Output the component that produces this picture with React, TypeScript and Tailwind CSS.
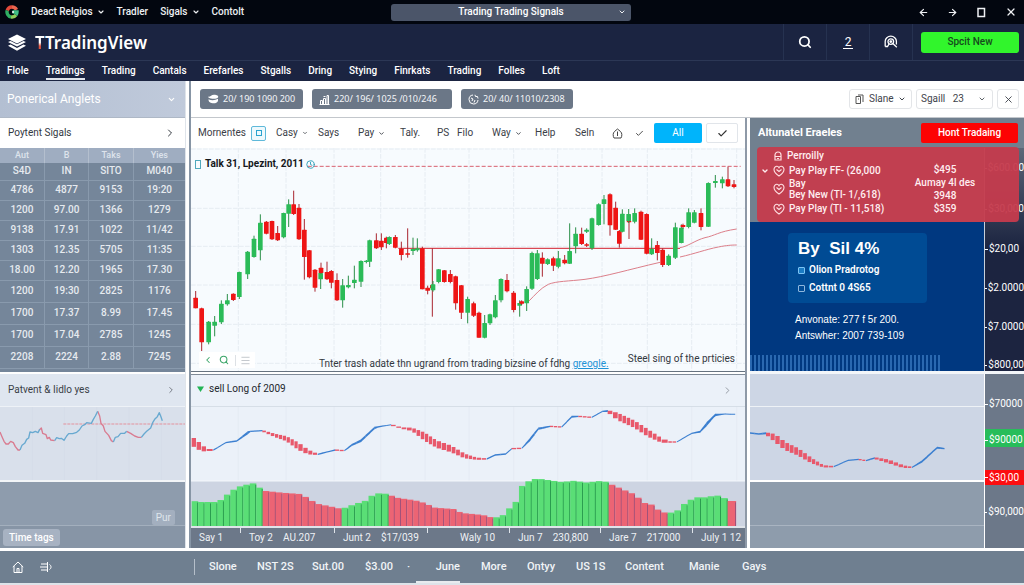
import type { ReactNode } from "react";
import {
  ArrowLeft,
  ArrowRight,
  Check,
  ChevronDown,
  ChevronLeft,
  ChevronRight,
  Clock,
  Menu,
  Search,
  X,
} from "lucide-react";

type Tone = "r" | "g" | "b";
type Candle = [tone: Tone, x: number, high: number, low: number, top: number, bottom: number];
type TrendPoint = [tone: Tone, x: number, y: number, thickness: number];

const CANDLES: Candle[] = [
  ["r", 32, 438, 490, 458, 490], ["r", 50, 488, 618, 490, 592], ["g", 71, 528, 598, 530, 592],
  ["g", 89, 513, 574, 530, 542], ["g", 109, 466, 537, 476, 532], ["g", 127, 447, 482, 466, 478],
  ["r", 145, 445, 468, 446, 465], ["g", 163, 380, 462, 381, 456], ["g", 188, 318, 402, 320, 388],
  ["g", 207, 272, 338, 281, 336], ["g", 226, 208, 346, 233, 316], ["r", 244, 228, 268, 230, 266],
  ["r", 261, 227, 285, 228, 283], ["r", 278, 243, 288, 264, 286], ["g", 296, 203, 280, 204, 277],
  ["g", 311, 163, 246, 178, 206], ["r", 326, 137, 210, 178, 207], ["r", 342, 177, 285, 188, 283],
  ["r", 358, 222, 404, 254, 336], ["r", 373, 315, 400, 316, 397], ["r", 390, 372, 440, 374, 428],
  ["g", 407, 380, 432, 384, 403], ["r", 408, 353, 386, 368, 384], ["r", 426, 350, 405, 381, 403],
  ["r", 439, 375, 430, 378, 413], ["r", 456, 385, 468, 405, 466], ["g", 473, 402, 488, 421, 466],
  ["g", 490, 392, 430, 420, 427], ["g", 508, 362, 430, 404, 414], ["g", 528, 346, 426, 348, 410],
  ["g", 544, 345, 355, 347, 351], ["g", 554, 284, 366, 286, 350], ["r", 574, 265, 312, 286, 310],
  ["r", 589, 265, 315, 287, 307], ["r", 604, 275, 310, 278, 294], ["g", 613, 274, 300, 276, 297],
  ["r", 631, 270, 310, 276, 308], ["r", 649, 290, 346, 311, 330], ["r", 668, 250, 338, 325, 329],
  ["g", 684, 278, 330, 312, 318], ["g", 697, 280, 320, 310, 316], ["r", 712, 305, 433, 310, 433],
  ["r", 728, 422, 448, 428, 437], ["r", 742, 310, 515, 420, 430], ["g", 744, 408, 440, 418, 436],
  ["g", 761, 372, 415, 373, 411], ["r", 778, 375, 413, 376, 411], ["r", 796, 375, 415, 387, 411],
  ["r", 812, 392, 494, 394, 475], ["r", 829, 420, 522, 421, 503], ["g", 848, 455, 535, 462, 503],
  ["r", 866, 470, 516, 475, 512], ["r", 882, 500, 578, 503, 578], ["g", 899, 510, 580, 534, 578],
  ["g", 915, 506, 540, 508, 535], ["g", 931, 450, 520, 466, 517], ["g", 948, 400, 472, 402, 466],
  ["r", 966, 387, 442, 405, 439], ["r", 986, 438, 502, 443, 495], ["g", 1004, 466, 515, 474, 482],
  ["r", 1010, 466, 480, 469, 476], ["g", 1025, 424, 498, 432, 475], ["g", 1041, 320, 435, 324, 431],
  ["g", 1057, 315, 405, 325, 402], ["r", 1072, 322, 395, 338, 356], ["g", 1088, 340, 360, 343, 357],
  ["r", 1105, 335, 378, 340, 362], ["g", 1120, 318, 370, 340, 365], ["r", 1139, 330, 358, 344, 355],
  ["g", 1154, 235, 357, 318, 356], ["g", 1172, 247, 325, 266, 304], ["r", 1190, 248, 300, 266, 297],
  ["g", 1205, 250, 264, 254, 260], ["r", 1205, 294, 306, 298, 302], ["g", 1221, 218, 315, 220, 310],
  ["g", 1241, 175, 242, 178, 240], ["g", 1257, 150, 238, 163, 177], ["r", 1275, 145, 272, 148, 241],
  ["r", 1292, 170, 255, 188, 254], ["r", 1303, 255, 308, 258, 296], ["g", 1312, 193, 262, 206, 260],
  ["r", 1332, 228, 282, 228, 232], ["g", 1331, 192, 234, 207, 228], ["g", 1349, 190, 235, 204, 230],
  ["r", 1368, 197, 285, 200, 284], ["r", 1385, 205, 328, 207, 326], ["g", 1400, 280, 330, 312, 328],
  ["r", 1417, 288, 346, 300, 324], ["r", 1433, 310, 366, 314, 360], ["g", 1451, 328, 363, 332, 360],
  ["g", 1471, 233, 342, 247, 338], ["g", 1489, 238, 295, 248, 294], ["r", 1494, 236, 250, 240, 246],
  ["g", 1511, 190, 250, 202, 246], ["g", 1528, 195, 235, 202, 233], ["r", 1548, 190, 256, 204, 246],
  ["g", 1570, 112, 246, 114, 245], ["g", 1591, 90, 128, 108, 114], ["g", 1612, 95, 130, 103, 115],
  ["r", 1629, 65, 126, 103, 124], ["r", 1647, 105, 130, 118, 126],
];

const MAIN_TREND: TrendPoint[] = [
  ["r", 20, 212, 28], ["r", 50, 233, 22], ["r", 65, 240, 8], ["b", 85, 240, 4], ["b", 122, 218, 4],
  ["b", 155, 213, 5], ["b", 188, 188, 9], ["b", 196, 184, 4], ["r", 232, 182, 4], ["r", 270, 196, 10],
  ["r", 305, 206, 15], ["r", 340, 228, 22], ["r", 370, 246, 14], ["b", 398, 253, 4], ["r", 450, 240, 4],
  ["b", 478, 242, 4], ["b", 500, 225, 6], ["b", 528, 212, 8], ["b", 568, 174, 8], ["b", 578, 171, 4],
  ["r", 618, 164, 3], ["r", 650, 174, 4], ["r", 682, 178, 10], ["r", 720, 200, 25], ["r", 755, 222, 22],
  ["r", 800, 237, 20], ["r", 840, 258, 14], ["r", 875, 266, 7], ["b", 905, 267, 4], ["b", 930, 255, 4],
  ["b", 962, 252, 4], ["r", 980, 236, 4], ["b", 1010, 235, 4], ["b", 1035, 208, 10], ["b", 1060, 176, 7],
  ["r", 1095, 169, 4], ["b", 1130, 171, 4], ["b", 1160, 140, 6], ["r", 1180, 139, 4], ["b", 1220, 142, 4],
  ["b", 1252, 124, 4], ["r", 1268, 123, 6], ["r", 1300, 140, 22], ["r", 1350, 163, 22], ["r", 1390, 189, 22],
  ["r", 1430, 211, 14], ["r", 1450, 216, 5], ["b", 1475, 216, 3], ["b", 1520, 190, 4], ["b", 1545, 185, 6],
  ["b", 1565, 162, 12], ["b", 1590, 135, 7], ["b", 1620, 132, 3], ["b", 1650, 133, 3],
];

const SIDE_TREND: TrendPoint[] = [
  ["b", 14, 189, 4], ["b", 40, 192, 4], ["r", 62, 190, 6], ["r", 90, 204, 24], ["r", 120, 228, 24],
  ["r", 160, 246, 22], ["r", 200, 272, 16], ["r", 235, 289, 7], ["b", 265, 290, 4], ["b", 308, 271, 4],
  ["r", 340, 268, 4], ["b", 362, 272, 4], ["r", 388, 264, 5], ["r", 430, 274, 11], ["r", 475, 290, 8],
  ["b", 500, 292, 4], ["b", 530, 274, 7], ["b", 575, 233, 6], ["b", 597, 236, 4],
];

const VOLUME: [tone: Tone, x: number, top: number][] = [
  ["g", 20, 392], ["g", 45, 396], ["g", 100, 396], ["g", 125, 375], ["g", 150, 356], ["g", 170, 347],
  ["g", 205, 340], ["g", 218, 348], ["r", 233, 362], ["r", 290, 368], ["r", 345, 372], ["r", 375, 388],
  ["r", 390, 400], ["r", 430, 408], ["g", 470, 417], ["g", 510, 402], ["g", 540, 393], ["g", 565, 374],
  ["g", 590, 368], ["r", 611, 374], ["r", 640, 384], ["r", 690, 391], ["r", 715, 398], ["r", 750, 413],
  ["r", 805, 417], ["r", 830, 429], ["r", 875, 433], ["r", 905, 437], ["g", 925, 445], ["g", 955, 435],
  ["g", 975, 413], ["g", 1000, 388], ["g", 1012, 346], ["g", 1040, 328], ["g", 1060, 326], ["g", 1130, 336],
  ["g", 1170, 332], ["g", 1200, 338], ["g", 1255, 332], ["r", 1271, 340], ["r", 1310, 357], ["r", 1350, 374],
  ["r", 1375, 398], ["r", 1400, 404], ["r", 1425, 424], ["g", 1448, 430], ["g", 1475, 424], ["g", 1500, 400],
  ["g", 1530, 382], ["g", 1570, 382], ["g", 1590, 374], ["r", 1628, 388], ["r", 1653, 398],
];

const QUOTES = [
  ["S4D", "IN", "SITO", "M040"],
  ["4786", "4877", "9153", "19:20"],
  ["1200", "97.00", "1366", "1279"],
  ["9138", "17.91", "1022", "11/42"],
  ["1303", "12.35", "5705", "11:35"],
  ["18.00", "12.20", "1965", "17.30"],
  ["1200", "19:30", "2825", "1176"],
  ["1700", "17.37", "8.99", "17.45"],
  ["1700", "17.04", "2785", "1245"],
  ["2208", "2224", "2.88", "7245"],
];

const ROW_HEIGHTS = [
  "h-[17px]", "h-5", "h-5", "h-5", "h-5", "h-5",
  "h-[22px]", "h-[22px]", "h-[22px]", "h-[22px]",
];

function valueAt(points: { x: number; v: number }[], x: number) {
  for (let i = 0; i < points.length - 1; i++) {
    const a = points[i];
    const b = points[i + 1];
    if (x >= a.x && x <= b.x) return a.v + ((b.v - a.v) * (x - a.x)) / (b.x - a.x);
  }
  return points[points.length - 1].v;
}

function Trend({ points }: { points: TrendPoint[] }) {
  const ys = points.map(([, x, y]) => ({ x, v: y }));
  const ts = points.map(([, x, , t]) => ({ x, v: t }));
  const out: ReactNode[] = [];
  points.slice(0, -1).forEach(([tone, x0], i) => {
    const x1 = points[i + 1][1];
    const steps = Math.max(1, Math.round((x1 - x0) / 14));
    for (let s = 0; s < steps; s++) {
      const a = x0 + ((x1 - x0) * s) / steps;
      const b = x0 + ((x1 - x0) * (s + 1)) / steps;
      const ta = valueAt(ts, a) / 2;
      const tb = valueAt(ts, b) / 2;
      const ya = valueAt(ys, a);
      const yb = valueAt(ys, b);
      if (tone === "r") {
        const t = Math.max(ta + tb, 4);
        out.push(<rect key={`${i}-${s}`} x={a} y={(ya + yb) / 2 - t / 2} width={b - a - 2} height={t} fill="#e8586b" />);
      } else {
        out.push(
          <path key={`${i}-${s}`} d={`M${a} ${ya - ta}L${b + 0.6} ${yb - tb}V${yb + tb}L${a} ${ya + ta}Z`} fill="#3b7fd0" />,
        );
      }
    }
  });
  return <g>{out}</g>;
}

function CandleChart() {
  return (
    <svg className="block h-[223px] w-full" viewBox="18 9 1662 669" preserveAspectRatio="none" role="img" aria-label="Price candles">
      <rect x="18" y="9" width="1662" height="669" fill="#f7fbfe" />
      <g stroke="#e6ecf2" strokeWidth="3">
        {[160, 303, 447, 587, 720, 852, 986, 1118, 1251, 1387, 1520, 1655].map((x) => (
          <path key={x} d={`M${x} 9V678`} strokeDasharray="14 4" />
        ))}
        {[12, 190, 304, 420, 538, 655].map((y) => (
          <path key={y} d={`M18 ${y}H1680`} strokeDasharray="14 4" />
        ))}
      </g>
      <path d="M368 64H1667" stroke="#d8616f" strokeWidth="3" strokeDasharray="12 6" />
      <path d="M640 310H1485" stroke="#d94854" strokeWidth="4" />
      <g fill="none" stroke="#dc7f8a" strokeWidth="3">
        <path d="M1030 470C1052 448 1066 430 1090 418C1115 408 1150 409 1200 403C1260 395 1330 374 1425 352M1485 336C1530 326 1560 314 1600 306C1625 301 1640 300 1655 300" />
        <path d="M1485 308C1510 304 1530 286 1560 278C1590 272 1600 260 1655 252" />
      </g>
      {CANDLES.map(([tone, x, high, low, top, bottom], i) => (
        <g key={i} fill={tone === "r" ? "#ee1515" : "#2bbb58"}>
          <rect x={x - 1.5} y={high} width="3" height={low - high} fill={tone === "r" ? "#a92630" : "#2c8f4a"} />
          <rect x={x - 7} y={top} width="14" height={bottom - top} rx="1.5" />
        </g>
      ))}
    </svg>
  );
}

function MomentumChart() {
  const tops = VOLUME.map(([, x, top]) => ({ x, v: top }));
  const bars: ReactNode[] = [];
  let x = 20;
  while (x < 1650) {
    let tone: Tone = "g";
    let next = 1653;
    for (const [t, px] of VOLUME) {
      if (px <= x + 1) tone = t;
    }
    for (const [t, px] of VOLUME) {
      if (px > x + 1 && t !== tone) {
        next = px;
        break;
      }
    }
    const count = Math.max(1, Math.round((next - x) / 19));
    const w = (next - x) / count;
    for (let i = 0; i < count; i++) {
      const bx = x + i * w;
      const top = valueAt(tops, bx + w / 2);
      bars.push(
        <g key={bx}>
          <rect x={bx} y={top} width={w + 0.4} height={468 - top} fill={tone === "g" ? "#5ade76" : "#ec6474"} />
          <rect x={bx + w - 3} y={top + 4} width="3" height={464 - top} fill={tone === "g" ? "#2a9c4f" : "#a0527a"} />
        </g>,
      );
    }
    x = next;
  }
  return (
    <svg className="block h-[120px] w-full" viewBox="18 108 1662 360" preserveAspectRatio="none" role="img" aria-label="Momentum and volume">
      <rect x="18" y="108" width="1662" height="225" fill="#ebf1f9" />
      <rect x="18" y="333" width="1662" height="135" fill="#cdd4e2" />
      <g stroke="#e3e9f2" strokeWidth="2">
        {[160, 303, 447, 587, 720, 852, 986, 1118, 1251, 1387, 1520, 1655].map((gx) => (
          <path key={gx} d={`M${gx} 108V333`} />
        ))}
      </g>
      <path d="M18 109H1680" stroke="#d2dae4" strokeWidth="3" />
      <path d="M18 333H1680" stroke="#f4f7fb" strokeWidth="3" />
      {bars}
      <Trend points={MAIN_TREND} />
    </svg>
  );
}

function PatternChart() {
  return (
    <svg className="block h-[73px] w-full" viewBox="0 111 555 219" preserveAspectRatio="none" role="img" aria-label="Pattern history">
      <g stroke="#c5cfde" strokeWidth="2">
        <path d="M97 111V330M193 111V330M290 111V330M387 111V330M484 111V330" opacity="0.3" />
      </g>
      <path d="M190 162H555" stroke="#e3929d" strokeWidth="3" strokeDasharray="9 3" />
      <g fill="none" strokeWidth="4" strokeLinejoin="round">
        <g stroke="#d97b90">
          <path d="M0 186L6 200L12 214L18 222L25 222L32 214L40 218L46 230L54 240L60 240" />
          <path d="M118 180L124 174L128 190L138 194L142 206L148 202L152 210L164 212" />
          <path d="M293 124L299 138L303 160L310 168L315 184L326 196L334 212L340 216" />
          <path d="M380 184L392 190L404 198L415 202L424 202" />
        </g>
        <g stroke="#68a9d0">
          <path d="M60 240L66 226L74 220L80 208L86 204L90 186L98 188L106 184L114 188L119 178" />
          <path d="M164 212L170 203L178 206L184 205L192 211L200 198L206 191L218 191L230 187L238 180L246 168L254 164L260 158L274 160L280 148L286 138L293 124" />
          <path d="M340 216L346 202L354 200L362 190L374 190L380 184" />
          <path d="M424 202L432 192L440 184L452 174L458 158L464 148L472 140L478 128L482 138L487 152" />
        </g>
      </g>
    </svg>
  );
}

function Brand() {
  return (
    <h1 className="flex items-center gap-2 pt-0.5 font-['Noto_Sans',sans-serif] text-[17px] font-semibold leading-6">
      <svg className="size-5" viewBox="0 0 20 20" fill="#fff" aria-hidden="true">
        <path d="M10 1.5L19 6L10 10.5L1 6Z" />
        <path d="M1 9L3.6 7.9L10 11.2L16.400 7.900L19 9L10 13.600Z" />
        <path d="M1 12.800L3.600 11.600L10 14.900L16.400 11.600L19 12.800L10 17.800Z" />
      </svg>
      <span>
        <span className="bg-linear-to-b from-white from-50% to-[#e0523f] to-65% bg-clip-text text-transparent">T</span>
        TradingView
      </span>
    </h1>
  );
}

function Globe() {
  return (
    <svg className="size-[14px]" viewBox="0 0 14 14" fill="none" strokeWidth="3.4" aria-hidden="true">
      <path d="M7 2A5 5 0 0 0 2.200 5.600" stroke="#e24a3a" />
      <path d="M7 2A5 5 0 0 1 11.500 4.800" stroke="#e8654e" />
      <path d="M2.200 5.600A5 5 0 0 0 6 11.900" stroke="#2fae62" />
      <path d="M6 11.900A5 5 0 0 0 11 10" stroke="#8fcf5a" />
      <path d="M11 10A5 5 0 0 0 12 7H7.500" stroke="#3fbf86" />
      <path d="M7 7H9" stroke="#fff" strokeWidth="1.500" />
    </svg>
  );
}

function Heart() {
  return (
    <svg className="size-3 shrink-0" viewBox="0 0 12 12" fill="none" stroke="#ffdfe2" strokeWidth="1.100" aria-hidden="true">
      <path d="M6 11C3 9 1 7 1 4.500C1 2.500 2.500 1.200 4 1.300C5 1.400 5.600 2 6 2.800C6.400 2 7 1.400 8 1.300C9.500 1.200 11 2.500 11 4.500C11 7 9 9 6 11Z" />
      <path d="M3.500 4.500L6 6.500L8.500 4.500" />
    </svg>
  );
}

const PILL = "flex h-5 items-center gap-1 whitespace-nowrap rounded-[3px] bg-[#6b7787] text-[9px] leading-5 text-[#f3f5f8] font-['Noto_Sans',sans-serif]";
const TOOL = "flex items-center gap-1 whitespace-nowrap text-[10px] text-[#3b4047]";

function TopBar() {
  return (
    <div className="flex h-6 items-center bg-[#02060f] pl-[5px] pr-[7px] text-[10px] font-medium text-[#eef0f3]">
      <div className="flex flex-1 items-center">
        <Globe />
        <nav className="ml-3 flex items-center gap-3">
          <a href="#deact" className="flex items-center gap-1">Deact Relgios <ChevronDown size={8} strokeWidth={3.500} /></a>
          <a href="#tradler">Tradler</a>
          <a href="#sigals" className="flex items-center gap-1">Sigals <ChevronDown size={8} strokeWidth={3.500} /></a>
          <a href="#contolt">Contolt</a>
        </nav>
      </div>
      <div className="relative flex w-60 items-center">
        <select aria-label="Workspace" className="h-[17px] w-full appearance-none rounded-[3px] bg-[#4b5569] text-center text-[10px] leading-4 text-white">
          <option>Trading Trading Signals</option>
        </select>
        <ChevronDown size={8} strokeWidth={3} className="pointer-events-none absolute right-[5px]" />
      </div>
      <div className="flex flex-1 items-center justify-end gap-[18px]">
        <button aria-label="Back"><ArrowLeft size={11} strokeWidth={2.500} /></button>
        <button aria-label="Forward"><ArrowRight size={11} strokeWidth={2.500} /></button>
        <button aria-label="Maximise">
          <svg className="size-[11px]" viewBox="0 0 11 11" fill="none" stroke="#eef0f3" strokeWidth="1.500" aria-hidden="true">
            <path d="M2 1.500H8.500V9.500H2Z" />
          </svg>
        </button>
        <button aria-label="Close"><X size={12} strokeWidth={2.500} /></button>
      </div>
    </div>
  );
}

function Header() {
  const cell = "flex h-9 w-[43px] items-center justify-center border-l border-[#263250]";
  const tabs = ["Flole", "Tradings", "Trading", "Cantals", "Erefarles", "Stgalls", "Dring", "Stying", "Finrkats", "Trading", "Folles", "Loft"];
  return (
    <header className="bg-[#1b2441] text-white">
      <div className="flex h-[37px] items-center justify-between border-b border-[#2c3755] pl-[7px] pr-[5px]">
        <Brand />
        <div className="flex items-center">
          <button aria-label="Search" className={cell}><Search size={14} strokeWidth={3} /></button>
          <button aria-label="Accounts" className={cell}>
            <span className="border-b border-white px-0.5 text-xs leading-3">2</span>
          </button>
          <button aria-label="Profile" className={cell}>
            <svg className="size-[14px]" viewBox="0 0 14 14" fill="none" stroke="#fff" strokeWidth="1.300" aria-hidden="true">
              <path d="M1.200 11.500V6.200A5.600 5 0 0 1 12.400 6.200V9.500" />
              <circle cx="6.800" cy="6.600" r="2.800" />
              <circle cx="6.800" cy="6.600" r=".8" fill="#fff" />
              <path d="M1.200 11.500H3.500L5 9M8.800 8.600L12.800 12.200" />
            </svg>
          </button>
          <div className="flex h-9 items-center border-l border-[#263250] pl-2">
            <button className="h-[21px] w-[98px] rounded-[3px] bg-[#31f52c] text-[10px] font-medium text-[#154a1c]">Spcit New</button>
          </div>
        </div>
      </div>
      <nav className="flex h-5 items-start gap-[17px] pl-[7px] text-[10px] font-medium leading-5">
        {tabs.map((tab, i) => (
          <a key={i} href="#tab" className={i === 1 ? "h-[19px] border-b-2 border-[#dfe3ea]" : ""}>{tab}</a>
        ))}
      </nav>
    </header>
  );
}

function LeftColumn() {
  return (
    <aside className="mr-[3px] flex w-[186px] shrink-0 flex-col border-r border-[#dfe4ea]">
      <button className="flex h-[37px] items-center justify-between border-b border-[#aeb8c6] bg-linear-to-r from-[#b3bfd2] to-[#c0cadb] pl-[7px] pr-[9px] text-xs text-white">
        Ponerical Anglets <ChevronDown size={9} strokeWidth={3} />
      </button>
      <button className="flex h-[30px] items-center justify-between pl-2 pr-[9px] text-[10px] text-[#33383f]">
        Poytent Sigals <ChevronRight size={12} strokeWidth={2} />
      </button>
      <div className="h-[224px] bg-[#75869a]">
        <table className="w-full table-fixed border-collapse text-center text-[10px] font-medium text-[#e6eaef]">
          <colgroup>
            <col className="w-[24%]" />
            <col className="w-[24%]" />
            <col className="w-[24%]" />
            <col />
          </colgroup>
          <thead className="bg-[#9fadc1] text-[9px] leading-[15px] text-[#dde3ec]">
            <tr>
              {["Aut", "B", "Taks", "Yies"].map((h) => (
                <th key={h} scope="col" className="border-r border-[#b4bfce] p-0 font-medium last:border-r-0">{h}</th>
              ))}
            </tr>
          </thead>
          <tbody>
            {QUOTES.map((row, r) => (
              <tr key={r} className={`${ROW_HEIGHTS[r]} border-b border-[#899aad]`}>
                {row.map((v, c) => (
                  <td key={c} className="border-r border-[#899aad] p-0 leading-3 last:border-r-0">{v}</td>
                ))}
              </tr>
            ))}
          </tbody>
        </table>
      </div>
      <section className="mt-0.5 bg-[#d9e0eb]">
        <button className="flex h-[33px] w-full items-center justify-between border-b border-[#eef2f7] bg-[#dfe6f0] pl-2 pr-[9px] text-[10px] text-[#3a3f47]">
          Patvent &amp; Iidlo yes <ChevronRight size={10} strokeWidth={1.500} />
        </button>
        <PatternChart />
      </section>
      <section className="flex grow flex-col border-t-2 border-[#f2f5f8] bg-[#8e9cad]">
        <div className="flex h-11 items-end justify-end border-b border-[#a3afbd] pr-[10px]">
          <span className="rounded-xs bg-[#a3afbf] px-1 text-[10px] leading-[15px] text-[#dfe5ec]">Pur</span>
        </div>
        <div className="flex grow items-center bg-[#8795a6] pl-[3px]">
          <button className="rounded-[3px] bg-[#a7b2c2] px-1.5 text-[10px] font-medium leading-[17px] text-white">Time tags</button>
        </div>
      </section>
    </aside>
  );
}

function Toolbar() {
  return (
    <div className="flex h-[37px] items-center justify-between border-b border-[#c3c7cc] pl-[9px] pr-[5px]">
      <div className="flex gap-[9px]">
        <button className={`${PILL} w-[103px] pl-[7px]`}>
          <svg className="h-2.5 w-3" viewBox="0 0 12 10" fill="#fff" aria-hidden="true">
            <path d="M1 2.500C3 3.500 4 1 7 .8C10 .8 12 2 11 3.500C10 5 6 4.800 4 4.500C2.500 4.300 1 3.500 1 2.500Z" />
            <path d="M1.500 5.200C4 6.500 8 6.500 11 4.800V7C10 9.300 7 9.800 4.500 9C2.500 8.500 1.300 7 1.500 5.200Z" />
          </svg>
          20/ 190 1090 200
        </button>
        <button className={`${PILL} w-[140px] pl-[7px]`}>
          <svg className="size-[11px]" viewBox="0 0 11 11" fill="none" stroke="#fff" aria-hidden="true">
            <path d="M.5 10.500H10.500M1.500 10V6.500H3.500V10M4.500 10V4.500H6.500V10M8 10V1.500H9.500V10M4.500 2.500H6.500" />
          </svg>
          220/ 196/ 1025 /010/246
        </button>
        <button className={`${PILL} w-[112px] pl-[7px]`}>
          <svg className="size-[11px]" viewBox="0 0 11 11" fill="none" stroke="#fff" aria-hidden="true">
            <path d="M5 1A4.500 4.500 0 1 0 10 6M7 .8L7.500 2.500L9.500 2.500L10 4.500M3 4L5 5L4 7M6 8.500L7 6" />
          </svg>
          20/ 40/ 11010/2308
        </button>
      </div>
      <div className="flex items-center gap-1 text-[10px] text-[#3f444b]">
        <label className="flex h-5 w-[63px] items-center rounded-[3px] border border-[#e3e5e8] px-[5px]">
          <svg className="size-[10px] shrink-0" viewBox="0 0 10 10" fill="none" stroke="#555" aria-hidden="true">
            <path d="M1 2.500H5.500V9.500H1ZM3 1H8V8M3 5H4" />
          </svg>
          <select aria-label="Layout" className="min-w-0 grow appearance-none pl-1">
            <option>Slane</option>
          </select>
          <ChevronDown size={8} strokeWidth={3} className="shrink-0" />
        </label>
        <label className="flex h-5 w-[77px] items-center rounded-[3px] border border-[#e3e5e8] pl-1 pr-[6px]">
          <select aria-label="Signal" className="min-w-0 grow appearance-none">
            <option>Sgaill &nbsp; 23</option>
          </select>
          <ChevronDown size={8} strokeWidth={2.500} className="shrink-0" />
        </label>
        <button aria-label="Close panel" className="flex h-5 w-[22px] items-center justify-center rounded-[3px] border border-[#e3e5e8]">
          <X size={11} strokeWidth={2} />
        </button>
      </div>
    </div>
  );
}

function ChartMenu() {
  return (
    <div className="grid h-[30px] grid-cols-[53px_25px_42px_40px_42px_37px_20px_35px_43px_40px_37px_23px_19px_52px_32px] items-center pl-[7px]">
      <button className={TOOL}>Mornentes</button>
      <button aria-label="Interval" className="flex size-[15px] items-center justify-center rounded-xs border border-[#5fb9da] bg-[#eef9fd]">
        <span className="size-[6px] border border-[#2aa3cf]" />
      </button>
      <button className={TOOL}>Casy <ChevronDown size={6} strokeWidth={3} /></button>
      <button className={TOOL}>Says</button>
      <button className={`${TOOL} gap-0`}>Pay <ChevronDown size={7} strokeWidth={3} /></button>
      <button className={TOOL}>Taly.</button>
      <button className={TOOL}>PS</button>
      <button className={TOOL}>Filo</button>
      <button className={`${TOOL} gap-0.5`}>Way <ChevronDown size={7} strokeWidth={3} /></button>
      <button className={TOOL}>Help</button>
      <button className={TOOL}>Seln</button>
      <button aria-label="Alerts">
        <svg className="size-[11px]" viewBox="0 0 11 11" fill="none" stroke="#444" aria-hidden="true">
          <path d="M2 10C.8 8 .8 5 2.500 3.500L5.500 1L8.500 3.500C10.200 5 10.200 8 9 10ZM5.500 3.500V8" />
        </svg>
      </button>
      <button aria-label="Confirm" className="text-[#444]"><Check size={9} strokeWidth={2.500} /></button>
      <button className="h-5 w-12 rounded-xs bg-[#00b4fb] text-[10px] text-white">All</button>
      <button aria-label="Apply" className="flex h-5 items-center justify-center rounded-xs border border-[#e1e5ea] text-[#333]">
        <Check size={11} strokeWidth={2.500} />
      </button>
    </div>
  );
}

function ChartColumn() {
  const axis = [
    ["Say 1"], ["Toy 2", "AU.207"], ["Junt 2", "$17/039"], ["Waly 10"], ["Jun 7", "230,800"], ["Jare 7", "217000"], ["July 1 12"],
  ];
  return (
    <main className="mr-[3px] flex min-w-0 grow flex-col border-r-2 border-[#8e99a7]">
      <ChartMenu />
      <section className="relative border-b border-[#66727f]">
        <CandleChart />
        <h2 className="absolute left-1 top-2 flex items-center gap-1 text-[10px] font-bold leading-4 text-[#15181c]">
          <span className="h-[9px] w-[6px] border border-[#4fa9bd]" />
          Talk 31, Lpezint, 2011
          <Clock size={9} strokeWidth={2.500} className="-ml-0.5 text-[#2f9fb9]" />
        </h2>
        <div className="absolute bottom-[3px] left-2 flex h-4 items-center gap-1.5 bg-white px-1 text-[#3aa568]">
          <button aria-label="Previous"><ChevronLeft size={10} strokeWidth={2.500} /></button>
          <button aria-label="Zoom"><Search size={10} strokeWidth={2.500} /></button>
          <button aria-label="Legend" className="border-l border-[#dde1e5] pl-1 text-[#aab0b7]"><Menu size={11} strokeWidth={1.500} /></button>
        </div>
        <p className="absolute bottom-0 left-32 text-[10px] leading-3.5 text-[#33383f]">
          Tnter trash adate thn ugrand from trading bizsine of fdhg <a href="#greogle" className="text-[#1d93d6] underline">greogle.</a>
        </p>
        <p className="absolute bottom-1 right-[10px] text-[10px] leading-4 text-[#33383f]">Steel sing of the prticies</p>
      </section>
      <section className="mt-0.5 border-t border-[#7f8a97]">
        <h2 className="flex h-[31px] items-center gap-[5px] bg-[#ebf1f9] pl-[6px] pr-3 text-[10px] leading-4 text-[#23272d]">
          <svg className="mb-1 h-[6px] w-[7px]" viewBox="0 0 7 6" fill="#22b455" aria-hidden="true"><path d="M0 .5H7L3.500 6Z" /></svg>
          <span className="grow pb-1">sell Long of 2009</span>
          <ChevronRight size={11} strokeWidth={2} className="text-[#8e959e]" />
        </h2>
        <MomentumChart />
      </section>
      <div className="grid grow grid-cols-[49px_94px_93px_82px_91px_92px_1fr] border-t-2 border-[#dfe4ea] bg-[#6c7889] text-[10px] leading-5 text-[#eef1f5]">
        {axis.map((labels, i) => (
          <div key={i} className="flex whitespace-nowrap">
            {i > 0 && <span className="h-[5px] w-px bg-[#dfe4ea]" />}
            <span className={i === 3 ? "flex gap-2.5 pl-8" : "flex gap-2.5 pl-2"}>
              {labels.map((l) => <span key={l}>{l}</span>)}
            </span>
          </div>
        ))}
      </div>
    </main>
  );
}

function AxisLabel({ children, className = "" }: { children: ReactNode; className?: string }) {
  return (
    <div className={`flex shrink-0 items-center gap-px text-[10px] leading-4 text-white ${className}`}>
      <span className="h-px w-[3px] bg-white" />
      {children}
    </div>
  );
}

function SignalsCard() {
  return (
    <div className="absolute left-[7px] right-[5px] top-[29px] grid h-[75px] grid-cols-[1fr_120px] rounded-[4px] bg-[#c53b4d]/95 pt-0.5 text-[10px] font-medium text-[#ffeef0]">
      <ul className="pl-1">
        <li className="flex h-[14px] items-center gap-1 pl-3">
          <svg className="size-2.5 shrink-0" viewBox="0 0 10 10" fill="none" stroke="#ffdfe2" strokeWidth="1.200" aria-hidden="true">
            <path d="M2 9V4A2.500 2.500 0 0 1 8 4V9ZM2 5.500H8M4 7.500H6" />
          </svg>
          <span>Perroilly</span>
        </li>
        <li className="flex h-[15px] items-center gap-1">
          <ChevronDown size={8} strokeWidth={4} /><Heart /><span>Pay Play FF- (26,000</span>
        </li>
        <li className="flex items-center gap-1 pl-3">
          <Heart />
          <span className="flex flex-col leading-[11px]"><span>Bay</span><span>Bey New (Tl- 1/,618)</span></span>
        </li>
        <li className="flex h-[18px] items-center gap-1 pl-3"><Heart /><span>Pay Play (Tl - 11,518)</span></li>
      </ul>
      <div className="flex flex-col pt-[14px] text-center leading-[13px]">
        {["$495", "Aumay 4l des", "3948", "$359"].map((v) => (
          <span key={v} className="pr-7">{v}</span>
        ))}
      </div>
    </div>
  );
}

function RightColumn() {
  return (
    <aside className="relative flex w-[274px] shrink-0 flex-col">
      <div className="flex h-[30px] items-center justify-between bg-[#71808f] pl-2 pr-[6px]">
        <h2 className="text-[11px] font-bold text-white">Altunatel Eraeles</h2>
        <button className="h-5 w-[97px] rounded-xs bg-[#fd0303] text-[10px] font-medium text-white">Hont Tradaing</button>
      </div>
      <div className="flex">
        <div className="grow">
          <div className="h-[74px] bg-[#71808f]" />
          <section className="flex h-[149px] flex-col bg-[#003880] text-white">
            <div className="ml-[38px] mt-[11px] h-[70px] w-[139px] rounded-[4px] bg-[#004b94] px-2.5 pt-1">
              <h3 className="whitespace-pre font-['Liberation_Sans',sans-serif] text-[17px] font-bold leading-6">By  Sil 4%</h3>
              <label className="flex h-[18px] items-center gap-1 text-[10px] font-semibold">
                <input type="checkbox" className="size-[7px] appearance-none rounded-[1px] border border-[#7cc4f4] bg-[#1b7cc4]" />
                Olion Pradrotog
              </label>
              <label className="flex h-[18px] items-center gap-1 text-[10px] font-semibold">
                <input type="checkbox" className="size-[7px] appearance-none rounded-[1px] border border-[#8fb7dd]" />
                Cottnt 0 4S65
              </label>
            </div>
            <p className="ml-[45px] mt-[9px] font-['Liberation_Sans',sans-serif] text-[10px] leading-4">
              Anvonate: 277 f 5r 200.
              <br />
              Antswher: 2007 739-109
            </p>
            <div className="mt-auto h-4 w-[192px] bg-[repeating-linear-gradient(90deg,#2a68b0_0_2px,#003880_2px_4px)]" />
          </section>
        </div>
        <div className="flex h-[223px] w-10 flex-col border-l border-[#c8d0da] bg-linear-to-b from-[#5c6878] to-[#1c2440] to-45%">
          <AxisLabel className="pt-3">$600.00</AxisLabel>
          <AxisLabel className="pt-[25px]">$30,000</AxisLabel>
          <AxisLabel className="pt-6">$20,00</AxisLabel>
          <AxisLabel className="pt-[23px]">$2.0000</AxisLabel>
          <AxisLabel className="pt-[23px]">$7.0000</AxisLabel>
          <AxisLabel className="pt-[22px]">$800,00</AxisLabel>
        </div>
      </div>
      <SignalsCard />
      <div className="relative flex grow border-t-3 border-[#f3f6f9]">
        <div className="flex grow flex-col bg-[#8e9cac]">
          <div className="h-[33px] border-b border-[#eef2f6] bg-[#cdd6e5]" />
          <svg className="block h-[73px] w-full bg-[#cdd6e5]" viewBox="14 111 702 219" preserveAspectRatio="none" role="img" aria-label="Signal trend">
            <Trend points={SIDE_TREND} />
          </svg>
          <div className="h-[46px] border-b border-t-2 border-b-[#a9b4c1] border-t-white" />
        </div>
        <div className="flex w-10 flex-col border-l border-white bg-[#6c7889]">
          <AxisLabel className="mt-[22px]">$70000</AxisLabel>
          <AxisLabel className="mt-[17px] h-[18px] bg-[#27bd5a] pt-1">$90000</AxisLabel>
          <AxisLabel className="mt-[23px] h-[15px] bg-[#fb0d10]">$30,00</AxisLabel>
          <AxisLabel className="mt-[19px]">$90,000</AxisLabel>
        </div>
      </div>
    </aside>
  );
}

function Footer() {
  const items = ["NST 2S", "Sut.00", "$3.00", "·", "June", "More", "Ontyy", "US 1S", "Content", "Manie", "Gays"];
  return (
    <footer className="mt-[3px] flex h-8 items-center bg-[#6f7f90] text-[11px] font-medium text-[#f1f4f7]">
      <div className="flex w-[194px] items-center gap-4 pl-3">
        <button aria-label="Home">
          <svg className="size-3" viewBox="0 0 12 12" fill="none" stroke="#fff" aria-hidden="true">
            <path d="M.8 6L6 1L11.200 6M2 5V11.500H10V5M5 11V7.500H7V11" />
          </svg>
        </button>
        <button aria-label="Timeline">
          <svg className="size-3" viewBox="0 0 12 12" fill="none" stroke="#fff" aria-hidden="true">
            <path d="M1 3H7M0 6H8M1 9H7M7.500 1V11M9.500 3.500C11.500 4.500 11.500 7.500 9.500 8.500" />
          </svg>
        </button>
      </div>
      <nav className="grid h-full grid-cols-[49px_55px_53px_42px_29px_45px_46px_49px_49px_64px_53px_40px] items-center">
        <a href="#slone" className="border-l border-[#b5bfca] pl-3.5 leading-4">Slone</a>
        {items.map((item) =>
          item === "June" ? (
            <a key={item} href="#june" className="-ml-1.5 flex h-full w-11 items-center justify-end border-b-2 border-[#e7ebef] pt-0.5">June</a>
          ) : (
            <a key={item} href="#item" className="justify-self-start pl-3.5">{item}</a>
          ),
        )}
      </nav>
    </footer>
  );
}

export default function App() {
  return (
    <div className="flex min-h-screen flex-col bg-white font-[Roboto,'Noto_Sans',sans-serif] leading-4">
      <TopBar />
      <Header />
      <div className="flex grow">
        <LeftColumn />
        <div className="flex min-w-0 grow flex-col border-l-2 border-[#8795a5]">
          <Toolbar />
          <div className="flex grow">
            <ChartColumn />
            <RightColumn />
          </div>
        </div>
      </div>
      <Footer />
      <div className="h-0.5 bg-[#dde3e9]" />
    </div>
  );
}
